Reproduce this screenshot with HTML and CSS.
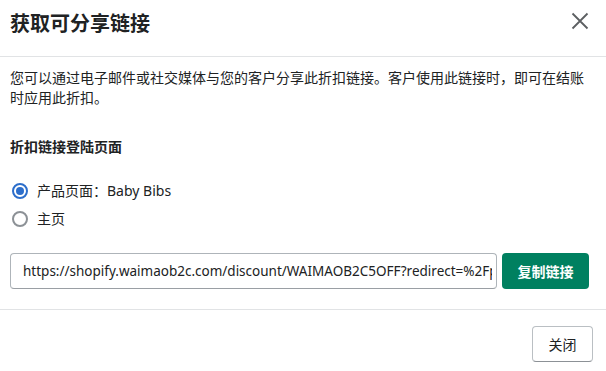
FILE: index.html
```html
<!DOCTYPE html>
<html>
<head>
<meta charset="utf-8">
<title>获取可分享链接</title>
<link rel="stylesheet" href="styles.css">
</head>
<body>
<div class="modal">
    <div class="modal-header">
        <h2 class="modal-title">获取可分享链接</h2>
        <button class="close-btn" type="button">
            <svg width="18" height="18" viewBox="0 0 18 18"><path d="M1.5 1.5l15 15M16.5 1.5l-15 15" stroke="#5c5f62" stroke-width="1.8" fill="none"/></svg>
        </button>
    </div>
    <div class="modal-body">
        <p class="intro">您可以通过电子邮件或社交媒体与您的客户分享此折扣链接。客户使用此链接时，即可在结账时应用此折扣。</p>
        <h3 class="sub-title">折扣链接登陆页面</h3>
        <ul class="radio-list">
            <li><span class="radio checked"></span>产品页面：Baby Bibs</li>
            <li><span class="radio"></span>主页</li>
        </ul>
        <div class="link-row">
            <input class="link-input" type="text" value="https://shopify.waimaob2c.com/discount/WAIMAOB2C5OFF?redirect=%2Fproducts%2Fbaby-bibs" readonly>
            <button class="btn btn-primary" type="button">复制链接</button>
        </div>
    </div>
    <div class="modal-footer">
        <button class="btn btn-default" type="button">关闭</button>
    </div>
</div>
</body>
</html>
```

FILE: styles.css
```css
body,div,ul,li,p,h2,h3{margin:0;padding:0;}
body{font:14px/20px "Noto Sans","Noto Sans CJK SC",sans-serif;color:#202223;background:#fff;}
ul{list-style-type:none;}
button{font-family:inherit;cursor:pointer;}

.modal{width:606px;height:371px;background:#fff;}

.modal-header{display:flex;justify-content:space-between;align-items:flex-start;height:47px;padding:9px 17px 0 10px;border-bottom:1px solid #e1e3e5;}
.modal-title{font-size:20px;line-height:28px;font-weight:700;font-family:"Noto Sans CJK SC",sans-serif;}
.close-btn{width:18px;height:18px;padding:0;margin-top:3px;border:0;background:none;display:flex;}

.modal-body{padding:11px 17px 20px 10px;}
.intro{margin-bottom:29px;}
.sub-title{font-size:14px;line-height:20px;font-weight:600;margin-bottom:20px;}

.radio-list li{display:flex;align-items:center;height:28px;}
.radio{width:16px;height:16px;box-sizing:border-box;border:2px solid #8c9196;border-radius:50%;margin:0 9px 0 2px;position:relative;}
.radio.checked{border-color:#2c6ecb;}
.radio.checked:after{content:"";position:absolute;left:2px;top:2px;width:8px;height:8px;border-radius:50%;background:#2c6ecb;}

.link-row{display:flex;gap:5px;margin-top:20px;}
.link-input{flex:1;height:36px;box-sizing:border-box;border:1px solid #aeb4b9;border-bottom-color:#9a9fa4;border-radius:4px;padding:0 4px 0 12px;font:13.5px "Noto Sans",sans-serif;color:#202223;outline:none;min-width:0;}
.btn{height:36px;border-radius:4px;font-size:14px;}
.btn-primary{width:87px;background:#008060;border:0;color:#fff;font-weight:600;}
.btn-default{width:61px;background:#fff;border:1px solid #babfc3;border-bottom-color:#8c9196;color:#202223;}

.modal-footer{display:flex;justify-content:flex-end;padding:16px 13px 0 0;border-top:1px solid #e1e3e5;}
```
